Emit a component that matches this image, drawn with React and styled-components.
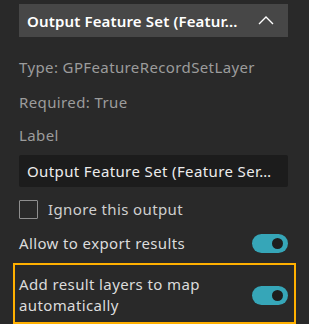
import React from "react";
import styled, { createGlobalStyle } from "styled-components";

const Global = createGlobalStyle`
  html, body { margin: 0; padding: 0; background: #292929; }
  body { font-family: "Noto Sans", Lato, sans-serif; }
`;

const Panel = styled.div`
  width: 309px;
  height: 324px;
  box-sizing: border-box;
  padding: 4px 21px 0 19px;
  display: flex;
  flex-direction: column;
  background: #292929;
  overflow: hidden;
  letter-spacing: 0.38px;
`;

const Header = styled.div`
  height: 33px;
  flex: none;
  background: #474747;
  display: flex;
  align-items: center;
  justify-content: space-between;
  padding: 0 14px 0 8px;
  color: #ffffff;
  font-size: 15px;
  font-weight: 600;
  letter-spacing: 0.15px;
`;

const HeaderTitle = styled.span`
  white-space: nowrap;
`;

const Meta = styled.div`
  margin-top: ${(p) => p.$top}px;
  color: #9c9c9c;
  font-size: 15px;
  line-height: 20px;
`;

const Input = styled.div`
  margin-top: 10px;
  height: 32px;
  flex: none;
  background: #1c1c1c;
  border-radius: 2px;
  display: flex;
  align-items: center;
  padding: 0 8px;
  color: #ececec;
  font-size: 15px;
  white-space: nowrap;
  overflow: hidden;
`;

const CheckRow = styled.label`
  margin-top: 12px;
  display: flex;
  align-items: center;
  gap: 10px;
  color: #cfcfcf;
  font-size: 15px;
  line-height: 20px;
`;

const Box = styled.span`
  width: 17px;
  height: 17px;
  border: 1.5px solid #8f8f8f;
  border-radius: 1px;
  flex: none;
`;

const SwitchRow = styled.div`
  margin-top: ${(p) => p.$top}px;
  display: flex;
  align-items: center;
  justify-content: space-between;
  color: #dcdcdc;
  font-size: 15px;
  line-height: 21px;
`;

const Highlight = styled.div`
  margin: 9px -8px 0 -6px;
  border: 2px solid #ffb000;
  padding: 9px 6px 6px 4px;
  display: flex;
  align-items: center;
  justify-content: space-between;
  color: #dcdcdc;
  font-size: 15px;
  line-height: 21px;
`;

const Toggle = styled.span`
  width: 36px;
  height: 19px;
  border-radius: 10px;
  background: #36a6b8;
  flex: none;
  display: flex;
  align-items: center;
  justify-content: flex-end;
  padding-right: 5px;
  box-sizing: border-box;
  &::after {
    content: "";
    width: 11px;
    height: 11px;
    border-radius: 50%;
    background: #1e1e1e;
  }
`;

const Chevron = () => (
  <svg width="16" height="9" viewBox="0 0 16 9">
    <path d="M1 8 L8 1 L15 8" fill="none" stroke="#ffffff" strokeWidth="1.4" />
  </svg>
);

export default function App() {
  return (
    <>
      <Global />
      <Panel>
        <Header>
          <HeaderTitle>Output Feature Set (Featur...</HeaderTitle>
          <Chevron />
        </Header>
        <Meta $top={20}>Type: GPFeatureRecordSetLayer</Meta>
        <Meta $top={15}>Required: True</Meta>
        <Meta $top={13}>Label</Meta>
        <Input>Output Feature Set (Feature Ser…</Input>
        <CheckRow>
          <Box />
          Ignore this output
        </CheckRow>
        <SwitchRow $top={14}>
          <span>Allow to export results</span>
          <Toggle />
        </SwitchRow>
        <Highlight>
          <span>
            Add result layers to map
            <br />
            automatically
          </span>
          <Toggle />
        </Highlight>
      </Panel>
    </>
  );
}
